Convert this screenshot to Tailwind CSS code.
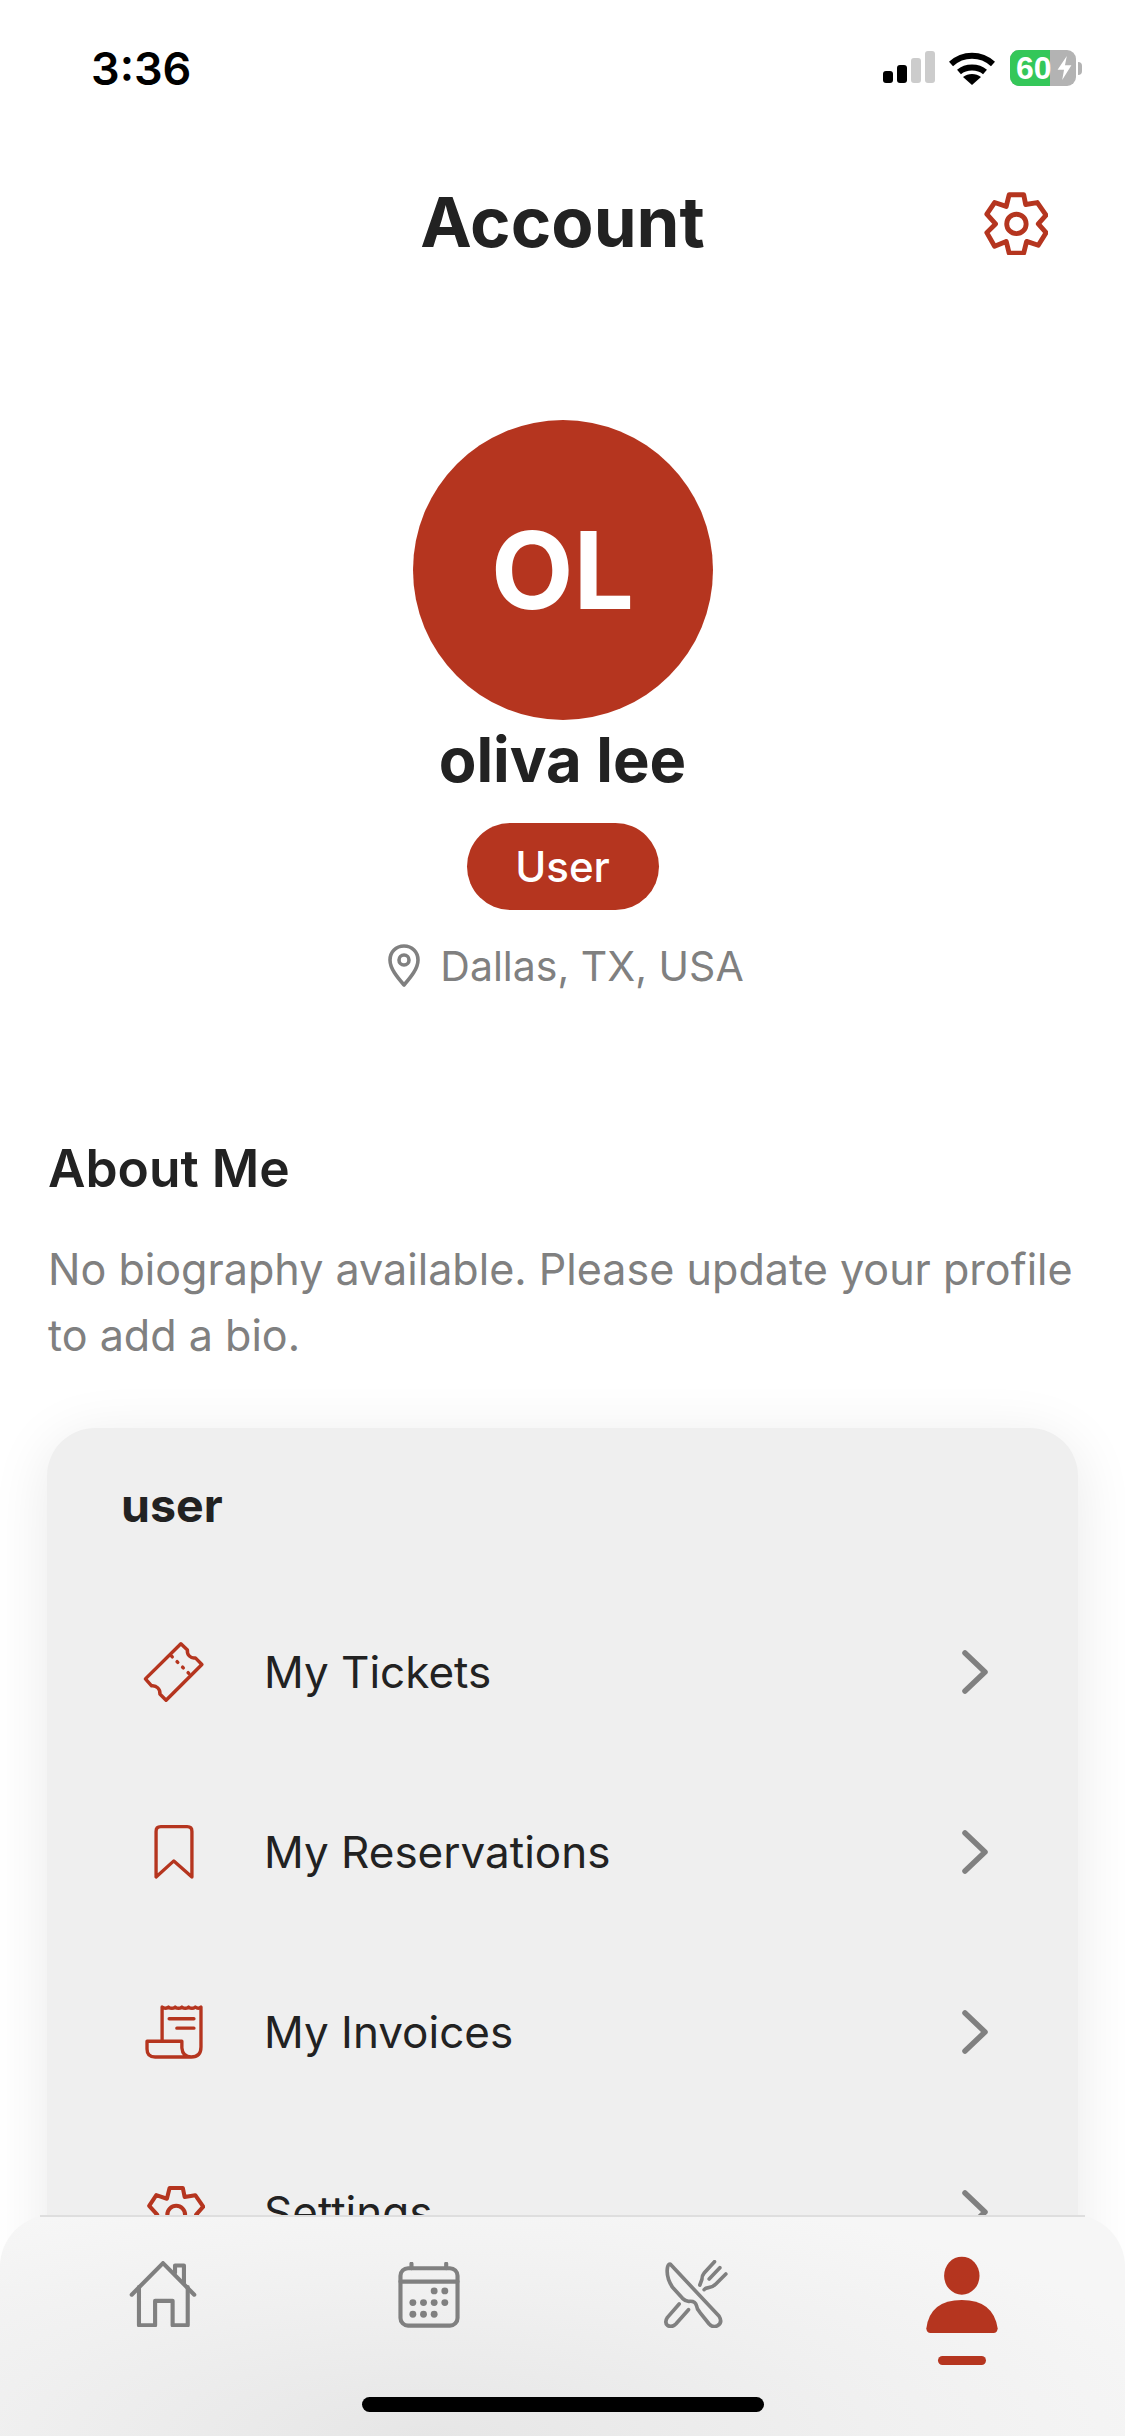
<!DOCTYPE html>
<html lang="en">
<head>
    <meta charset="UTF-8">
    <meta name="viewport" content="width=device-width, initial-scale=1.0">
    <title>Account</title>
    <script src="https://cdn.jsdelivr.net/npm/@tailwindcss/browser@4"></script>
</head>
<body class="bg-white font-['Inter',sans-serif] text-[#222222] antialiased">
    <div class="relative w-[1125px] h-[2436px] overflow-hidden bg-white">
        <!-- Status bar -->
        <div class="h-[150px] pt-[45px] pl-[91px] pr-[43px] flex justify-between items-start">
            <span class="text-[45px] leading-[48px] font-semibold text-black">3:36</span>
            <div class="flex items-start pt-[6px]">
                <div class="flex items-end gap-[4px] h-[34px] pb-[2px]">
                    <span class="w-[10px] h-[12px] rounded-[3px] bg-black"></span>
                    <span class="w-[10px] h-[18px] rounded-[3px] bg-black"></span>
                    <span class="w-[10px] h-[25px] rounded-[3px] bg-[#cccccc]"></span>
                    <span class="w-[10px] h-[32px] rounded-[3px] bg-[#cccccc]"></span>
                </div>
                <svg class="ml-[14px] w-[46px] h-[34px]" viewBox="0 0 46 34" fill="none" stroke="black" stroke-width="6">
                    <path d="M2 13 C14 2 32 2 44 13"/>
                    <path d="M10 21 C17 15 29 15 36 21"/>
                    <path d="M23 34 L14 26 C19 22 27 22 32 26 Z" fill="black" stroke="none"/>
                </svg>
                <div class="ml-[15px] relative w-[66px] h-[36px] -mt-[1px] rounded-[9px] overflow-hidden bg-[#b3b3b3] flex">
                    <div class="w-[40px] h-full bg-[#34c759]"></div>
                    <span class="absolute left-[6px] top-0 font-['Liberation_Sans',sans-serif] text-[32px] leading-[36px] font-bold text-white">60</span>
                    <svg class="absolute left-[46px] top-[6px] w-[17px] h-[24px]" viewBox="0 0 17 26" fill="white"><path d="M11 0 L1 15 H8 L6 26 L16 10 H9 Z"/></svg>
                </div>
                <span class="ml-[2px] mt-[11px] w-[4px] h-[13px] rounded-r-full bg-[#b3b3b3]"></span>
            </div>
        </div>

        <!-- Header -->
        <header class="h-[144px] grid grid-cols-[1fr_auto_1fr] items-center">
            <span></span>
            <h1 class="text-[69px] leading-[84px] font-bold">Account</h1>
            <svg class="justify-self-end mr-[77px] -mt-[2px] w-[68px] h-[68px]" viewBox="20 15 70 70" fill="none" stroke="#b5351f" stroke-width="5" stroke-linejoin="round">
                <path d="M50 23 H65 L67 33 L79 31 L88 44 L80 53 L88 62 L80 75 L68 71 L65 83 H50 L47 71 L35 76 L27 62 L36 53 L27 43 L35 31 L47 35 Z"/>
                <circle cx="57.500" cy="53" r="10"/>
            </svg>
        </header>

        <!-- Profile -->
        <section class="mt-[126px] flex flex-col items-center">
            <div class="w-[300px] h-[300px] rounded-full bg-[#b5351f] flex items-center justify-center text-white text-[107px] leading-none font-bold">OL</div>
            <div class="mt-[4px] text-[61.500px] leading-[72px] font-bold">oliva lee</div>
            <div class="mt-[27px] w-[192px] h-[87px] rounded-full bg-[#b5351f] flex items-center justify-center text-white text-[42px] font-medium">User</div>
            <div class="mt-[30px] ml-[6px] flex items-center text-[#808080] text-[41px] leading-[52px]">
                <svg class="w-[34px] h-[44px] mr-[19px]" viewBox="0 0 34 44" fill="none" stroke="#808080" stroke-width="3.600">
                    <path d="M17 41 C11 34 3 25 3 16 C3 8 9 2 17 2 C25 2 31 8 31 16 C31 25 23 34 17 41 Z" stroke-linejoin="round"/>
                    <circle cx="17" cy="16" r="5"/>
                </svg>
                <span>Dallas, TX, USA</span>
            </div>
        </section>

        <!-- About -->
        <section class="mt-[145px] pl-[48px] pr-[40px]">
            <h2 class="text-[51.500px] leading-[62px] font-semibold">About Me</h2>
            <p class="mt-[37px] text-[43.100px] leading-[66px] text-[#808080]">No biography available. Please update your profile to add a bio.</p>
        </section>

        <!-- Menu card -->
        <section class="mt-[60px] mx-[47px] w-[1031px] rounded-[48px] bg-[#efefef] shadow-[0_10px_60px_rgba(0,0,0,0.09)] pl-[74px] pr-[90px] pt-[47px] h-[1100px]">
            <h3 class="text-[46.500px] leading-[60px] font-bold">user</h3>
            <ul class="mt-[47px]">
                <li class="h-[180px] pl-[22px] flex items-center">
                    <svg class="w-[62px] h-[62px]" viewBox="133 68 180 180" fill="none" stroke="#b5351f" stroke-width="10" stroke-linejoin="round" stroke-linecap="round">
                        <path d="M243 76 L262 94 C260 108 272 120 285 117 L304 136 L200 240 L182 222 C184 208 172 196 158 198 L140 178 Z"/>
                        <path d="M216 112 L218 114 M232 128 L234 130 M248 144 L250 146 M264 160 L266 162"/>
                    </svg>
                    <span class="ml-[59px] text-[44px] font-normal">My Tickets</span>
                    <svg class="ml-auto w-[26px] h-[44px]" viewBox="0 0 26 44" fill="none" stroke="#808080" stroke-width="5.500" stroke-linecap="round" stroke-linejoin="round"><path d="M3 3 L23 22 L3 41"/></svg>
                </li>
                <li class="h-[180px] pl-[22px] flex items-center">
                    <svg class="w-[62px] h-[62px]" viewBox="130 605 185 185" fill="none" stroke="#b5351f" stroke-width="10" stroke-linejoin="round" stroke-linecap="round">
                        <path d="M169 772 V636 Q169 622 183 622 H262 Q276 622 276 636 V772 L222 724 Z"/>
                    </svg>
                    <span class="ml-[59px] text-[44px] font-normal">My Reservations</span>
                    <svg class="ml-auto w-[26px] h-[44px]" viewBox="0 0 26 44" fill="none" stroke="#808080" stroke-width="5.500" stroke-linecap="round" stroke-linejoin="round"><path d="M3 3 L23 22 L3 41"/></svg>
                </li>
                <li class="h-[180px] pl-[22px] flex items-center">
                    <svg class="w-[62px] h-[62px]" viewBox="130 1145 185 185" fill="none" stroke="#b5351f" stroke-width="10" stroke-linejoin="round" stroke-linecap="round">
                        <path d="M187 1262 V1163 Q196 1170 206 1163 Q216 1170 226 1163 Q236 1170 246 1163 Q256 1170 266 1163 Q276 1170 286 1163 Q295 1170 303 1163 V1282 Q303 1312 274 1312 H166 Q142 1312 142 1288 V1265 H246 V1285 Q248 1312 274 1312"/>
                        <path d="M208 1198 H282 M231 1226 H282"/>
                    </svg>
                    <span class="ml-[59px] text-[44px] font-normal">My Invoices</span>
                    <svg class="ml-auto w-[26px] h-[44px]" viewBox="0 0 26 44" fill="none" stroke="#808080" stroke-width="5.500" stroke-linecap="round" stroke-linejoin="round"><path d="M3 3 L23 22 L3 41"/></svg>
                </li>
                <li class="h-[180px] pl-[22px] flex items-center">
                    <svg class="w-[62px] h-[62px]" viewBox="20 15 70 70" fill="none" stroke="#b5351f" stroke-width="4.600" stroke-linejoin="round">
                        <path d="M50 23 H65 L67 33 L79 31 L88 44 L80 53 L88 62 L80 75 L68 71 L65 83 H50 L47 71 L35 76 L27 62 L36 53 L27 43 L35 31 L47 35 Z"/>
                        <circle cx="57.500" cy="53" r="10"/>
                    </svg>
                    <span class="ml-[59px] text-[44px] font-normal">Settings</span>
                    <svg class="ml-auto w-[26px] h-[44px]" viewBox="0 0 26 44" fill="none" stroke="#808080" stroke-width="5.500" stroke-linecap="round" stroke-linejoin="round"><path d="M3 3 L23 22 L3 41"/></svg>
                </li>
            </ul>
        </section>

        <!-- Tab bar -->
        <nav class="absolute left-0 right-0 bottom-0 h-[221px] rounded-t-[52px] bg-[#f6f6f6] bg-[radial-gradient(ellipse_at_38%_100%,#e6e6e6_0%,#f0f0f0_45%,#f6f6f6_80%)] grid grid-cols-4 px-[30px]">
            <span class="absolute top-0 left-[40px] right-[40px] h-[2px] bg-[#dedede]"></span>
            <div class="flex flex-col items-center pt-[46px]">
                <svg class="w-[68px] h-[66px]" viewBox="360 338 198 192" fill="none" stroke="#808080" stroke-width="12" stroke-linecap="round" stroke-linejoin="round">
                    <path d="M368 436 L459 344 L550 436"/>
                    <path d="M389 414 V525 H436 V454 H487 V525 H531 V414"/>
                    <path d="M494 372 V351 H520 V402"/>
                </svg>
            </div>
            <div class="flex flex-col items-center pt-[47px]">
                <svg class="w-[64px] h-[66px]" viewBox="1113 340 182 192" fill="none" stroke="#808080" stroke-width="12" stroke-linecap="round">
                    <rect x="1121" y="358" width="166" height="167" rx="22"/>
                    <path d="M1121 397 H1287 M1153 345 V358 M1254 345 V358"/>
                    <g fill="#808080" stroke="none">
                        <circle cx="1219" cy="424" r="10"/><circle cx="1250" cy="424" r="10"/>
                        <circle cx="1157" cy="458" r="10"/><circle cx="1188" cy="458" r="10"/><circle cx="1219" cy="458" r="10"/><circle cx="1250" cy="458" r="10"/>
                        <circle cx="1157" cy="492" r="10"/><circle cx="1188" cy="492" r="10"/><circle cx="1219" cy="492" r="10"/>
                    </g>
                </svg>
            </div>
            <div class="flex flex-col items-center pt-[45px]">
                <svg class="w-[68px] h-[68px]" viewBox="283 333 195 204" fill="none" stroke="#808080" stroke-width="11" stroke-linecap="round" stroke-linejoin="round">
                    <path d="M303 345 L450 502 Q461 520 445 530 Q431 537 420 525 L392 490 Q383 480 382 470 Q378 455 360 457 Q350 458 340 448 L310 415 Q290 385 295 355 Q297 345 303 345 Z"/>
                    <path d="M330 465 L295 505 Q285 520 295 529 Q308 537 320 525 L358 482"/>
                    <path d="M436 338 L405 372 Q398 380 398 392 L392 408 M452 356 L420 390 M470 375 L440 405 Q430 415 418 416 Q408 417 405 422"/>
                </svg>
            </div>
            <div class="flex flex-col items-center pt-[41px]">
                <svg class="w-[72px] h-[78px]" viewBox="1019 318 199 234" preserveAspectRatio="none" fill="#b5351f">
                    <ellipse cx="1118" cy="377" rx="49" ry="57"/>
                    <path d="M1020 535 Q1030 450 1118 450 Q1205 450 1217 535 Q1217 549 1205 549 H1032 Q1020 549 1020 535 Z"/>
                </svg>
                <span class="mt-[22px] w-[48px] h-[9px] rounded-full bg-[#b5351f]"></span>
            </div>
            <!-- Home indicator -->
            <span class="absolute left-[362px] bottom-[24px] w-[402px] h-[15px] rounded-full bg-black"></span>
        </nav>
    </div>
</body>
</html>
